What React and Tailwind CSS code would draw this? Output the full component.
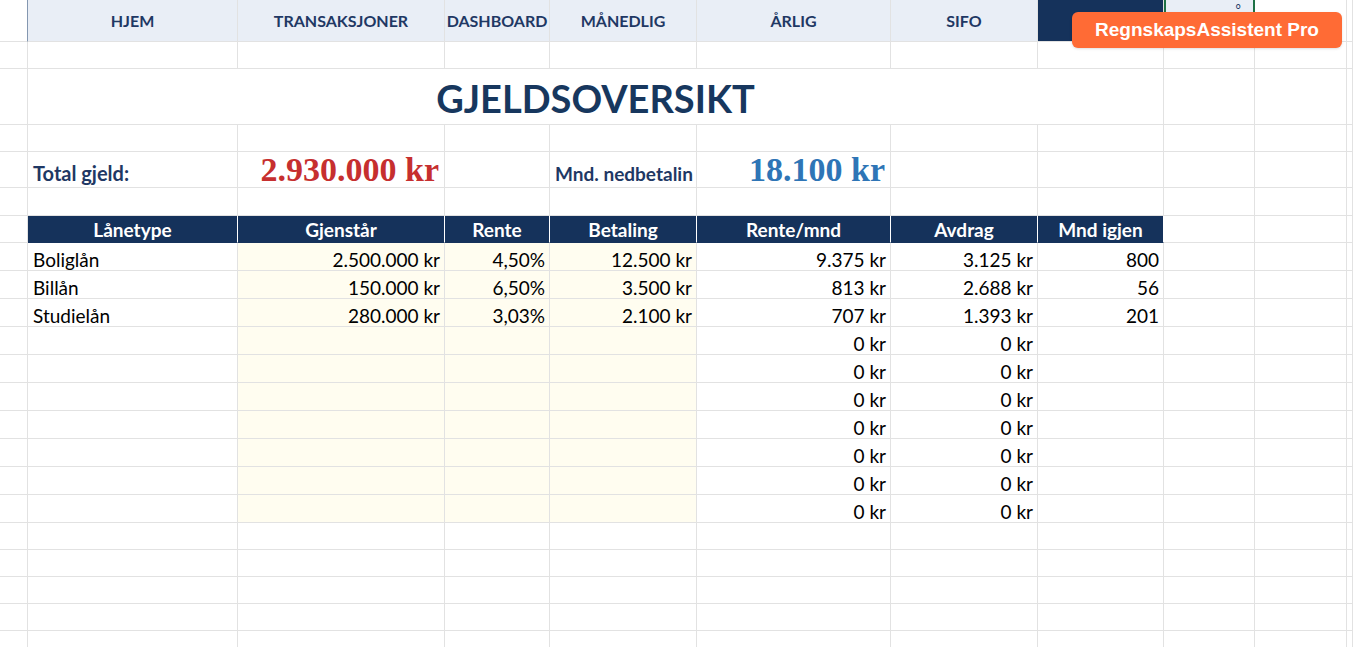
import clsx from 'clsx';

const COLS = "grid grid-cols-[28px_210px_207px_105px_147px_194px_147px_126px_91px_92px_1fr]";

const Cell = ({ children, className }) => (
  <div className={clsx("border-r border-b border-[#e2e2e2] flex items-center overflow-hidden whitespace-nowrap", className)}>
    {children}
  </div>
);

const EmptyCells = ({ n }) => Array.from({ length: n }).map((_, i) => <Cell key={i} />);

const nav = ["HJEM", "TRANSAKSJONER", "DASHBOARD", "MÅNEDLIG", "ÅRLIG", "SIFO"];

const loans = [
  ["Boliglån", "2.500.000 kr", "4,50%", "12.500 kr", "9.375 kr", "3.125 kr", "800"],
  ["Billån", "150.000 kr", "6,50%", "3.500 kr", "813 kr", "2.688 kr", "56"],
  ["Studielån", "280.000 kr", "3,03%", "2.100 kr", "707 kr", "1.393 kr", "201"],
];
const emptyLoans = Array.from({ length: 7 }).map(() => ["", "", "", "", "0 kr", "0 kr", ""]);

const headers = ["Lånetype", "Gjenstår", "Rente", "Betaling", "Rente/mnd", "Avdrag", "Mnd igjen"];

const tb = "border-[#d3d9e1] items-end pb-[1px] leading-none text-[19px]";

export default function App() {
  return (
    <div className="relative h-[647px] w-[1353px] overflow-hidden bg-white font-['Lato',sans-serif] text-black">
      {/* nav row */}
      <div className={clsx(COLS, "h-[42px]")}>
        <Cell className="border-r-[#8497b0] border-b-[#e2e2e2]" />
        {nav.map((n) => (
          <Cell key={n} className="justify-center bg-[#e9eef6] border-[#8497b0] text-[16px] font-bold text-[#1f3864]">
            {n}
          </Cell>
        ))}
        {/* active tab, label hidden under the badge */}
        <Cell className="bg-[#15325b] border-[#8497b0]" />
        <Cell className="bg-[#e9eef6] border-l-2 border-r-2 border-l-[#1e7145] border-r-[#1e7145] border-b-[#8497b0] justify-end items-start pt-[3px] pr-3 text-[13px] text-[#1f3864] leading-none">
          °
        </Cell>
        <EmptyCells n={2} />
      </div>

      <div className={clsx(COLS, "h-[27px]")}><EmptyCells n={11} /></div>

      {/* title */}
      <div className={clsx(COLS, "h-[56px]")}>
        <Cell />
        <Cell className="col-span-7 justify-center pt-[3px] text-[38px] font-bold text-[#17375e]">
          GJELDSOVERSIKT
        </Cell>
        <EmptyCells n={3} />
      </div>

      <div className={clsx(COLS, "h-[27px]")}><EmptyCells n={11} /></div>

      {/* totals */}
      <div className={clsx(COLS, "h-[36px]")}>
        <Cell />
        <Cell className="items-end pb-[4px] pl-[5px] leading-none text-[20px] font-bold text-[#1f3864]">Total gjeld:</Cell>
        <Cell className="items-end justify-end pr-[5px] leading-none font-['Liberation_Serif',serif] text-[34px] font-bold text-[#c62f2f]">2.930.000 kr</Cell>
        <Cell />
        <Cell className="items-end pb-[4px] pl-[5px] leading-none text-[19px] font-bold text-[#1f3864]">Mnd. nedbetalin</Cell>
        <Cell className="items-end justify-end pr-[5px] leading-none font-['Liberation_Serif',serif] text-[34px] font-bold text-[#2e75b6]">18.100 kr</Cell>
        <EmptyCells n={5} />
      </div>

      <div className={clsx(COLS, "h-[28px]")}><EmptyCells n={11} /></div>

      {/* header */}
      <div className={clsx(COLS, "h-[27px]")}>
        <Cell />
        {headers.map((h) => (
          <Cell key={h} className="justify-center pt-[2px] bg-[#15325b] border-r-white border-b-[#15325b] text-[19px] font-bold text-white">
            {h}
          </Cell>
        ))}
        <EmptyCells n={3} />
      </div>

      {/* data */}
      {[...loans, ...emptyLoans].map((r, i) => (
        <div key={i} className={clsx(COLS, "h-[28px]")}>
          <Cell />
          <Cell className={clsx(tb, "pl-[5px]")}>{r[0]}</Cell>
          <Cell className={clsx(tb, "justify-end pr-[4px] bg-[#fffdf0]")}>{r[1]}</Cell>
          <Cell className={clsx(tb, "justify-end pr-[4px] bg-[#fffdf0]")}>{r[2]}</Cell>
          <Cell className={clsx(tb, "justify-end pr-[4px] bg-[#fffdf0]")}>{r[3]}</Cell>
          <Cell className={clsx(tb, "justify-end pr-[4px]")}>{r[4]}</Cell>
          <Cell className={clsx(tb, "justify-end pr-[4px]")}>{r[5]}</Cell>
          <Cell className={clsx(tb, "justify-end pr-[4px]")}>{r[6]}</Cell>
          <EmptyCells n={3} />
        </div>
      ))}

      {Array.from({ length: 5 }).map((_, i) => (
        <div key={i} className={clsx(COLS, "h-[27px]")}><EmptyCells n={11} /></div>
      ))}

      {/* badge */}
      <div className="absolute left-[1072px] top-[12px] flex h-[36px] w-[270px] items-center justify-center rounded-md bg-[#ff6b35] font-['Liberation_Sans',sans-serif] text-[19px] font-bold text-white shadow-sm">
        RegnskapsAssistent Pro
      </div>
    </div>
  );
}
